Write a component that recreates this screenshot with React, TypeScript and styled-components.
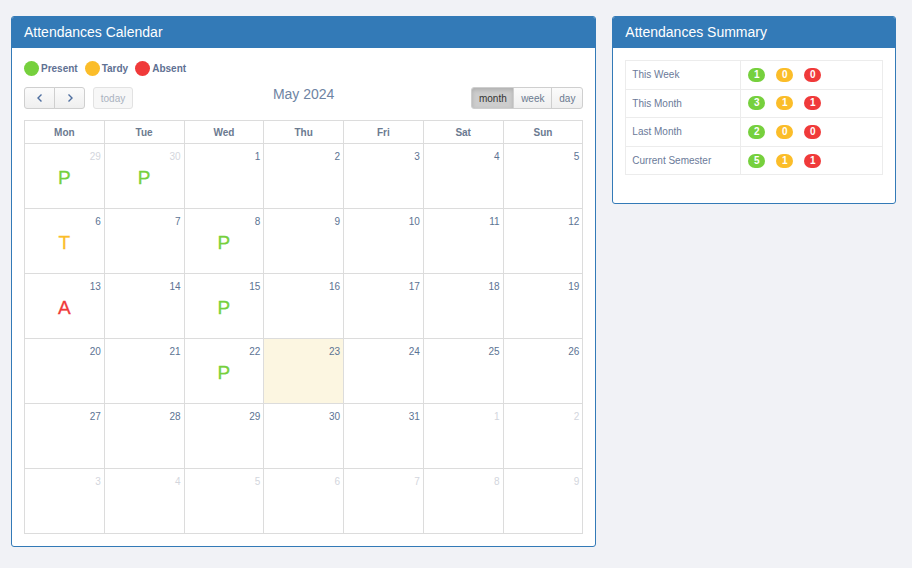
import React from "react";
import styled, { createGlobalStyle } from "styled-components";

const Global = createGlobalStyle`
  html, body { margin: 0; padding: 0; background: #f1f2f6; }
  body { font-family: "Liberation Sans", Arial, sans-serif; }
  * { box-sizing: border-box; }
`;

const Page = styled.div`
  display: flex;
  align-items: flex-start;
  gap: 16px;
  padding: 16px 16px 0 11px;
  width: 912px;
  height: 568px;
`;

const Panel = styled.section<{ $w: number }>`
  width: ${(p) => p.$w}px;
  background: #fff;
  border: 1px solid #337ab7;
  border-radius: 3px;
  overflow: hidden;
`;

const PanelHeader = styled.div`
  height: 31px;
  background: #337ab7;
  color: #fff;
  font-size: 14px;
  line-height: 31px;
  padding: 0 12px;
`;

const PanelBody = styled.div<{ $pb: number }>`
  padding: 12px 12px ${(p) => p.$pb}px 12px;
`;

const Legend = styled.div`
  display: flex;
  align-items: center;
  gap: 7px;
  height: 16px;
`;

const LegendItem = styled.div`
  display: flex;
  align-items: center;
  gap: 2px;
  font-size: 10px;
  font-weight: bold;
  color: #5f7193;
`;

const Dot = styled.span<{ $c: string }>`
  width: 15px;
  height: 15px;
  border-radius: 50%;
  background: ${(p) => p.$c};
  display: inline-block;
`;

const Toolbar = styled.div`
  display: grid;
  grid-template-columns: 1fr auto 1fr;
  align-items: start;
  margin-top: 11px;
  height: 33px;
`;

const Left = styled.div`
  display: flex;
  gap: 8px;
`;

const Right = styled.div`
  display: flex;
  justify-content: flex-end;
`;

const Group = styled.div`
  display: flex;
`;

const Btn = styled.button<{ $active?: boolean; $disabled?: boolean; $w: number }>`
  width: ${(p) => p.$w}px;
  height: 22px;
  padding: 0;
  font-family: "Liberation Sans", Arial, sans-serif;
  font-size: 10px;
  border: 1px solid ${(p) => (p.$disabled ? "#e2e2e2" : "#cfcfcf")};
  background: ${(p) =>
    p.$active ? "#cdcdcd" : p.$disabled ? "#f7f7f7" : "linear-gradient(#fbfbfb, #efefef)"};
  box-shadow: ${(p) => (p.$active ? "inset 0 2px 4px rgba(0,0,0,0.15)" : "none")};
  color: ${(p) => (p.$active ? "#333" : p.$disabled ? "#aab2c0" : "#6b7a90")};
  display: flex;
  align-items: center;
  justify-content: center;
  border-radius: 0;
  margin-left: -1px;
  &:first-child { border-radius: 3px 0 0 3px; margin-left: 0; }
  &:last-child { border-radius: 0 3px 3px 0; }
  &:only-child { border-radius: 3px; }
`;

const Title = styled.h2`
  margin: 0;
  font-size: 14px;
  font-weight: normal;
  color: #6e84a3;
  line-height: 15px;
`;

const Grid = styled.div`
  display: grid;
  grid-template-columns: repeat(7, 1fr);
  border-left: 1px solid #dcdcdc;
  border-top: 1px solid #dcdcdc;
`;

const HeadCell = styled.div`
  height: 23px;
  border-right: 1px solid #dcdcdc;
  border-bottom: 1px solid #dcdcdc;
  font-size: 10px;
  font-weight: bold;
  color: #6b7a90;
  display: flex;
  align-items: center;
  justify-content: center;
`;

const DayCell = styled.div<{ $today?: boolean }>`
  height: 65px;
  border-right: 1px solid #dcdcdc;
  border-bottom: 1px solid #dcdcdc;
  background: ${(p) => (p.$today ? "#fcf6e1" : "#fff")};
  display: flex;
  flex-direction: column;
  align-items: stretch;
  padding: 7px 3px 0 3px;
`;

const DayNum = styled.div<{ $other?: boolean }>`
  text-align: right;
  font-size: 10px;
  line-height: 12px;
  color: ${(p) => (p.$other ? "#d3d6dd" : "#5c7393")};
`;

const Mark = styled.div<{ $c: string }>`
  text-align: center;
  font-size: 19px;
  line-height: 22px;
  margin-top: 4px;
  color: ${(p) => p.$c};
  -webkit-text-stroke: 0.3px ${(p) => p.$c};
`;

const Table = styled.table`
  width: 100%;
  border-collapse: collapse;
  border: 1px solid #ececec;
`;

const Td = styled.td<{ $w?: number }>`
  height: 28.6px;
  border: 1px solid #ececec;
  padding: 0 6px;
  font-size: 10px;
  color: #6b7a99;
  width: ${(p) => (p.$w ? `${p.$w}px` : "auto")};
`;

const Badges = styled.div`
  display: flex;
  gap: 11px;
  padding-left: 1px;
`;

const Badge = styled.span<{ $c: string }>`
  min-width: 17px;
  height: 14px;
  border-radius: 7px;
  background: ${(p) => p.$c};
  color: #fff;
  font-size: 10px;
  font-weight: bold;
  line-height: 14px;
  text-align: center;
  display: inline-block;
`;

const GREEN = "#76d03d";
const YELLOW = "#fbbd29";
const RED = "#f03a3a";

type Cell = { n: number; other?: boolean; mark?: "P" | "T" | "A"; today?: boolean };

const markColor = { P: GREEN, T: YELLOW, A: RED } as const;

const weeks: Cell[][] = [
  [{ n: 29, other: true, mark: "P" }, { n: 30, other: true, mark: "P" }, { n: 1 }, { n: 2 }, { n: 3 }, { n: 4 }, { n: 5 }],
  [{ n: 6, mark: "T" }, { n: 7 }, { n: 8, mark: "P" }, { n: 9 }, { n: 10 }, { n: 11 }, { n: 12 }],
  [{ n: 13, mark: "A" }, { n: 14 }, { n: 15, mark: "P" }, { n: 16 }, { n: 17 }, { n: 18 }, { n: 19 }],
  [{ n: 20 }, { n: 21 }, { n: 22, mark: "P" }, { n: 23, today: true }, { n: 24 }, { n: 25 }, { n: 26 }],
  [{ n: 27 }, { n: 28 }, { n: 29 }, { n: 30 }, { n: 31 }, { n: 1, other: true }, { n: 2, other: true }],
  [3, 4, 5, 6, 7, 8, 9].map((n) => ({ n, other: true })),
];

const summary = [
  { label: "This Week", v: [1, 0, 0] },
  { label: "This Month", v: [3, 1, 1] },
  { label: "Last Month", v: [2, 0, 0] },
  { label: "Current Semester", v: [5, 1, 1] },
];

const Chevron = ({ dir }: { dir: "l" | "r" }) => (
  <svg width="10" height="10" viewBox="0 0 10 10">
    <path
      d={dir === "l" ? "M6.5 1.5 L3 5 L6.5 8.5" : "M3.5 1.5 L7 5 L3.5 8.5"}
      fill="none"
      stroke="#4f6fa0"
      strokeWidth="1.4"
    />
  </svg>
);

export default function App() {
  return (
    <>
      <Global />
      <Page>
        <Panel $w={586}>
          <PanelHeader>Attendances Calendar</PanelHeader>
          <PanelBody $pb={12}>
            <Legend>
              <LegendItem><Dot $c={GREEN} />Present</LegendItem>
              <LegendItem><Dot $c={YELLOW} />Tardy</LegendItem>
              <LegendItem><Dot $c={RED} />Absent</LegendItem>
            </Legend>
            <Toolbar>
              <Left>
                <Group>
                  <Btn $w={31}><Chevron dir="l" /></Btn>
                  <Btn $w={31}><Chevron dir="r" /></Btn>
                </Group>
                <Group>
                  <Btn $w={40} $disabled>today</Btn>
                </Group>
              </Left>
              <Title>May 2024</Title>
              <Right>
                <Group>
                  <Btn $w={43} $active>month</Btn>
                  <Btn $w={39}>week</Btn>
                  <Btn $w={32}>day</Btn>
                </Group>
              </Right>
            </Toolbar>
            <Grid>
              {["Mon", "Tue", "Wed", "Thu", "Fri", "Sat", "Sun"].map((d) => (
                <HeadCell key={d}>{d}</HeadCell>
              ))}
              {weeks.flat().map((c, i) => (
                <DayCell key={i} $today={c.today}>
                  <DayNum $other={c.other}>{c.n}</DayNum>
                  {c.mark && <Mark $c={markColor[c.mark]}>{c.mark}</Mark>}
                </DayCell>
              ))}
            </Grid>
          </PanelBody>
        </Panel>
        <Panel $w={284}>
          <PanelHeader>Attendances Summary</PanelHeader>
          <PanelBody $pb={28}>
            <Table>
              <tbody>
                {summary.map((r) => (
                  <tr key={r.label}>
                    <Td $w={115}>{r.label}</Td>
                    <Td>
                      <Badges>
                        <Badge $c={GREEN}>{r.v[0]}</Badge>
                        <Badge $c={YELLOW}>{r.v[1]}</Badge>
                        <Badge $c={RED}>{r.v[2]}</Badge>
                      </Badges>
                    </Td>
                  </tr>
                ))}
              </tbody>
            </Table>
          </PanelBody>
        </Panel>
      </Page>
    </>
  );
}
